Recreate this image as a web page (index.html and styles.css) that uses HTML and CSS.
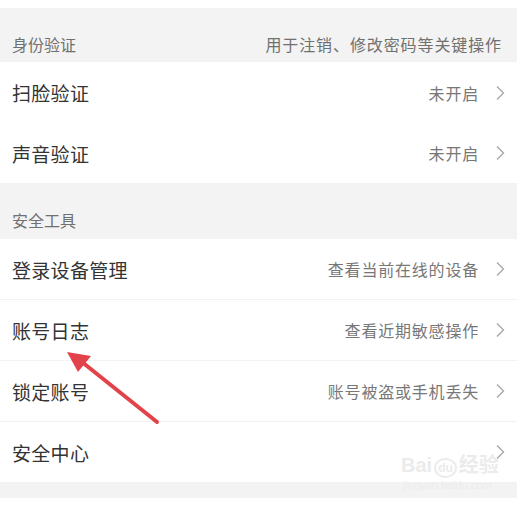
FILE: index.html
```html
<!DOCTYPE html>
<html lang="zh">
<head>
<meta charset="utf-8">
<link rel="stylesheet" href="styles.css">
</head>
<body>
<div class="page">
  <div class="top"></div>
  <div class="group-head"><span>身份验证</span><span class="head-note">用于注销、修改密码等关键操作</span></div>
  <div class="row"><span class="title">扫脸验证</span><span class="right"><span class="sub">未开启</span><svg class="chev" viewBox="0 0 10 16"><polyline points="2,1.5 8.5,8 2,14.5"/></svg></span></div>
  <div class="row"><span class="title">声音验证</span><span class="right"><span class="sub">未开启</span><svg class="chev" viewBox="0 0 10 16"><polyline points="2,1.5 8.5,8 2,14.5"/></svg></span></div>
  <div class="group-head second"><span>安全工具</span></div>
  <div class="row"><span class="title">登录设备管理</span><span class="right"><span class="sub">查看当前在线的设备</span><svg class="chev" viewBox="0 0 10 16"><polyline points="2,1.5 8.5,8 2,14.5"/></svg></span></div>
  <div class="row"><span class="title">账号日志</span><span class="right"><span class="sub">查看近期敏感操作</span><svg class="chev" viewBox="0 0 10 16"><polyline points="2,1.5 8.5,8 2,14.5"/></svg></span></div>
  <div class="row"><span class="title">锁定账号</span><span class="right"><span class="sub">账号被盗或手机丢失</span><svg class="chev" viewBox="0 0 10 16"><polyline points="2,1.5 8.5,8 2,14.5"/></svg></span></div>
  <div class="row"><span class="title">安全中心</span><span class="right"><svg class="chev" viewBox="0 0 10 16"><polyline points="2,1.5 8.5,8 2,14.5"/></svg></span></div>
  <div class="bottom"></div>

  <svg class="arrow" width="527" height="510" viewBox="0 0 527 510">
    <line x1="157" y1="422" x2="82" y2="362" stroke="#e2434b" stroke-width="4" stroke-linecap="round"/>
    <polygon points="67,352 91,356 78,372" fill="#e2434b"/>
  </svg>

  <div class="watermark">
    <div class="wm-main">Bai<span class="wm-du">du</span>经验</div>
    <div class="wm-url">jingyan.baidu.com</div>
  </div>
</div>
</body>
</html>
```

FILE: styles.css
```css
* { box-sizing: border-box; }
html, body { margin: 0; padding: 0; background: #fff; }
body { font-family: "Noto Sans CJK SC", "Noto Sans", sans-serif; }
.page {
  position: relative;
  width: 527px;
  height: 510px;
  overflow: hidden;
  padding-right: 10px;
}
.top { height: 8px; background: #fff; }
.group-head {
  height: 54px;
  background: #f3f3f3;
  display: flex;
  justify-content: space-between;
  align-items: flex-end;
  padding: 0 15px 8px 12px;
  font-size: 16px;
  line-height: 20px;
  color: #707070;
}
.group-head.second { height: 55px; padding-bottom: 9px; }
.head-note { letter-spacing: 0.9px; }
.row {
  height: 61px;
  display: flex;
  align-items: center;
  justify-content: space-between;
  padding: 0 12px 0 12px;
  border-bottom: 1px solid #f2f2f2;
  background: #fff;
}
.row:nth-of-type(3), .row:last-of-type { border-bottom: none; }
.title { font-size: 19px; color: #333; letter-spacing: 0.3px; }
.right { display: flex; align-items: center; }
.sub { font-size: 16px; color: #777; letter-spacing: 0.8px; }
.chev {
  width: 10px;
  height: 16px;
  margin-left: 16px;
  fill: none;
  stroke: #a8a8a8;
  stroke-width: 1.4;
}
.bottom { height: 15px; background: #f3f3f3; }
.arrow { position: absolute; left: 0; top: 0; }
.watermark {
  position: absolute;
  left: 401px;
  top: 454px;
  white-space: nowrap;
  color: #ebebeb;
  font-family: "Liberation Sans", "Noto Sans CJK SC", sans-serif;
}
.wm-main { font-size: 20px; line-height: 22px; font-weight: bold; }
.wm-du {
  display: inline-block;
  margin: 0 2px;
  padding: 0 2px;
  font-size: 12px;
  border: 2px solid #ebebeb;
  border-radius: 50%;
  line-height: 16px;
}
.wm-url { font-size: 11px; line-height: 14px; color: #ececec; margin-left: 2px; }
```
